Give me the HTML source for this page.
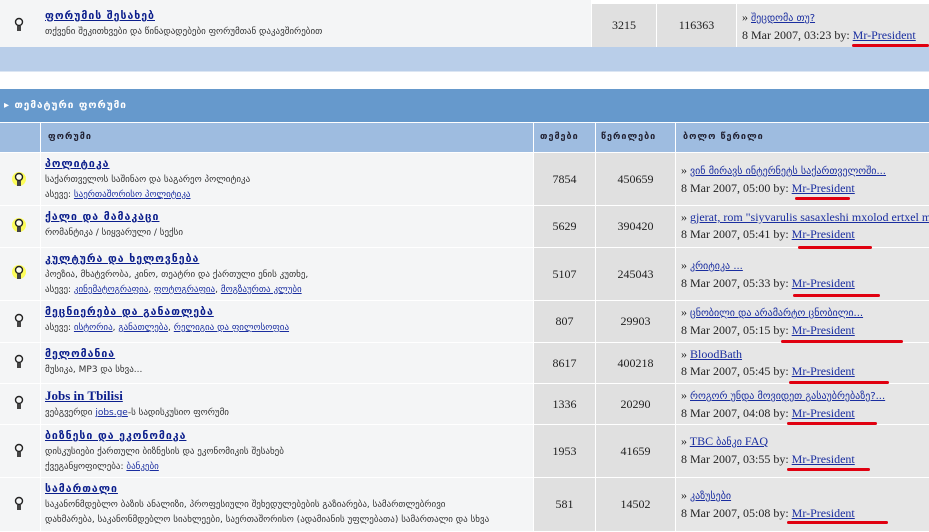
<!DOCTYPE html>
<html><head><meta charset="utf-8"><style>
body{margin:0;width:929px;height:531px;overflow:hidden;background:#fff;font-family:"DejaVu Sans","Liberation Sans",sans-serif;position:relative}
.row{position:absolute;left:0;width:929px;}
.c{position:absolute;top:0;bottom:1px;}
.ic{left:0;width:40px;background:#f4f5f6}
.fo{left:41px;width:492px;background:#f4f5f6;font-size:9px;color:#333;padding:4px 0 0 4px;box-sizing:border-box;line-height:15px;white-space:nowrap;overflow:hidden}
.t{left:534px;width:61px;background:#e0e0e0;font-family:"Liberation Serif",serif;font-size:12px;color:#222;display:flex;align-items:center;justify-content:center}
.p{left:596px;width:79px;background:#e0e0e0;font-family:"Liberation Serif",serif;font-size:12px;color:#222;display:flex;align-items:center;justify-content:center}
.l{left:676px;width:253px;background:#e6e6e6;font-size:12px;padding:3px 0 0 5px;box-sizing:border-box;line-height:17px;white-space:nowrap;overflow:hidden;font-family:"Liberation Serif","DejaVu Sans",serif;color:#222}
.l .g{font-size:10px;font-family:"DejaVu Sans",sans-serif}
a{color:#0b1e8c;text-decoration:underline}
.fo b a{font-size:10.5px;font-weight:bold;color:#0b1e8c;letter-spacing:1px}
.fo .s a{color:#1a2ea0}
.l a{color:#1a2ea0}
.red{position:absolute;height:3px;background:#e00010;border-radius:2px}
.hd{position:absolute;top:123px;height:29px;line-height:29px;font-size:9px;font-weight:bold;color:#223;letter-spacing:1px}
</style></head><body>
<!-- top row -->
<div class="row" style="top:0;height:48px">
 <div class="c" style="left:0;width:591px;background:#f4f5f6"></div>
 <div class="c fo" style="padding-top:9px;background:none;width:540px"><b><a>ფორუმის შესახებ</a></b><br>თქვენი შეკითხვები და წინადადებები ფორუმთან დაკავშირებით</div>
 <div class="c t" style="left:592px;width:64px;top:4px">3215</div><div class="c p" style="left:657px;width:79px;top:4px">116363</div>
 <div class="c l" style="left:737px;width:192px;padding-top:5px;top:4px">» <a class="g">შეცდომა თუ?</a><br>8 Mar 2007, 03:23 by: <a>Mr-President</a></div>
</div>
<div style="position:absolute;top:47px;left:0;width:929px;height:24px;background:#b9cee9;border-bottom:1px solid #dce6f3"></div>
<div style="position:absolute;top:89px;left:0;width:929px;height:33px;background:#6699cc;color:#fff;font-weight:bold;font-size:10px;letter-spacing:1px;line-height:33px;padding-left:4px">▸ თემატური ფორუმი</div>
<div style="position:absolute;top:123px;left:0;width:929px;height:29px;background:#9ebce0"></div>
<div style="position:absolute;top:123px;left:40px;width:1px;height:29px;background:#fff"></div>
<div style="position:absolute;top:123px;left:533px;width:1px;height:29px;background:#fff"></div>
<div style="position:absolute;top:123px;left:595px;width:1px;height:29px;background:#fff"></div>
<div style="position:absolute;top:123px;left:675px;width:1px;height:29px;background:#fff"></div>
<div class="hd" style="left:48px">ფორუმი</div>
<div class="hd" style="left:540px">თემები</div>
<div class="hd" style="left:601px">წერილები</div>
<div class="hd" style="left:683px">ბოლო წერილი</div>

<div class="row" style="top:153px;height:53px"><div class="c ic"></div>
 <div class="c fo"><b><a>პოლიტიკა</a></b><br>საქართველოს საშინაო და საგარეო პოლიტიკა<br><span class="s">ასევე: <a>საერთაშორისო პოლიტიკა</a></span></div>
 <div class="c t">7854</div><div class="c p">450659</div>
 <div class="c l" style="padding-top:9px">» <a class="g">ვინ მირავს ინტერნეტს საქართველოში...</a><br>8 Mar 2007, 05:00 by: <a>Mr-President</a></div></div>
<div class="row" style="top:206px;height:42px"><div class="c ic"></div>
 <div class="c fo"><b><a>ქალი და მამაკაცი</a></b><br>რომანტიკა / სიყვარული / სექსი</div>
 <div class="c t">5629</div><div class="c p">390420</div>
 <div class="c l">» <a>gjerat, rom "siyvarulis sasaxleshi mxolod ertxel m</a><br>8 Mar 2007, 05:41 by: <a>Mr-President</a></div></div>
<div class="row" style="top:248px;height:53px"><div class="c ic"></div>
 <div class="c fo"><b><a>კულტურა და ხელოვნება</a></b><br>პოეზია, მხატვრობა, კინო, თეატრი და ქართული ენის კუთხე,<br><span class="s">ასევე: <a>კინემატოგრაფია</a>, <a>ფოტოგრაფია</a>, <a>მოგზაურთა კლუბი</a></span></div>
 <div class="c t">5107</div><div class="c p">245043</div>
 <div class="c l" style="padding-top:9px">» <a class="g">კრიტიკა ...</a><br>8 Mar 2007, 05:33 by: <a>Mr-President</a></div></div>
<div class="row" style="top:301px;height:42px"><div class="c ic"></div>
 <div class="c fo"><b><a>მეცნიერება და განათლება</a></b><br><span class="s">ასევე: <a>ისტორია</a>, <a>განათლება</a>, <a>რელიგია და ფილოსოფია</a></span></div>
 <div class="c t">807</div><div class="c p">29903</div>
 <div class="c l">» <a class="g">ცნობილი და არამარტო ცნობილი...</a><br>8 Mar 2007, 05:15 by: <a>Mr-President</a></div></div>
<div class="row" style="top:343px;height:41px"><div class="c ic"></div>
 <div class="c fo"><b><a>მელომანია</a></b><br>მუსიკა, MP3 და სხვა...</div>
 <div class="c t">8617</div><div class="c p">400218</div>
 <div class="c l">» <a>BloodBath</a><br>8 Mar 2007, 05:45 by: <a>Mr-President</a></div></div>
<div class="row" style="top:384px;height:41px"><div class="c ic"></div>
 <div class="c fo"><b><a style="font-family:'Liberation Serif',serif;font-size:13px;letter-spacing:0">Jobs in Tbilisi</a></b><br><span class="s">ვებგვერდი <a>jobs.ge</a>-ს სადისკუსიო ფორუმი</span></div>
 <div class="c t">1336</div><div class="c p">20290</div>
 <div class="c l">» <a class="g">როგორ უნდა მოვიდეთ გასაუბრებაზე?...</a><br>8 Mar 2007, 04:08 by: <a>Mr-President</a></div></div>
<div class="row" style="top:425px;height:53px"><div class="c ic"></div>
 <div class="c fo"><b><a>ბიზნესი და ეკონომიკა</a></b><br>დისკუსიები ქართული ბიზნესის და ეკონომიკის შესახებ<br><span class="s">ქვეგანყოფილება: <a>ბანკები</a></span></div>
 <div class="c t">1953</div><div class="c p">41659</div>
 <div class="c l" style="padding-top:8px">» <a>TBC <span class="g">ბანკი</span> FAQ</a><br>8 Mar 2007, 03:55 by: <a>Mr-President</a></div></div>
<div class="row" style="top:478px;height:54px"><div class="c ic"></div>
 <div class="c fo"><b><a>სამართალი</a></b><br>საკანონმდებლო ბაზის ანალიზი, პროფესიული შეხედულებების გაზიარება, სამართლებრივი<br>დახმარება, საკანონმდებლო სიახლეები, საერთაშორისო (ადამიანის უფლებათა) სამართალი და სხვა</div>
 <div class="c t">581</div><div class="c p">14502</div>
 <div class="c l" style="padding-top:9px">» <a class="g">კაზუსები</a><br>8 Mar 2007, 05:08 by: <a>Mr-President</a></div></div>

<!-- bulbs -->
<svg width="40" height="531" style="position:absolute;left:0;top:0">
<defs><g id="b"><circle cx="0" cy="-3" r="3.5" fill="none" stroke="#222" stroke-width="1.4"/><path d="M-2 1h4v5h-4z" fill="#444"/></g>
<g id="y"><circle cx="0" cy="-1" r="7" fill="#ffff33" opacity=".8"/><circle cx="0" cy="-3" r="3.5" fill="#ffe" stroke="#222" stroke-width="1.4"/><path d="M-2 1h4v5h-4z" fill="#444"/></g></defs>
<use href="#b" x="19" y="25"/><use href="#y" x="19" y="180"/><use href="#y" x="19" y="226"/><use href="#y" x="19" y="273"/>
<use href="#b" x="19" y="321"/><use href="#b" x="19" y="362"/><use href="#b" x="19" y="403"/><use href="#b" x="19" y="451"/><use href="#b" x="19" y="504"/>
</svg>
<div class="red" style="left:852px;width:77px;top:44px"></div>
<div class="red" style="left:795px;width:55px;top:197px"></div>
<div class="red" style="left:798px;width:74px;top:246px"></div>
<div class="red" style="left:793px;width:87px;top:294px"></div>
<div class="red" style="left:781px;width:122px;top:340px"></div>
<div class="red" style="left:789px;width:100px;top:381px"></div>
<div class="red" style="left:787px;width:90px;top:422px"></div>
<div class="red" style="left:787px;width:83px;top:468px"></div>
<div class="red" style="left:787px;width:101px;top:521px"></div>
</body></html>
